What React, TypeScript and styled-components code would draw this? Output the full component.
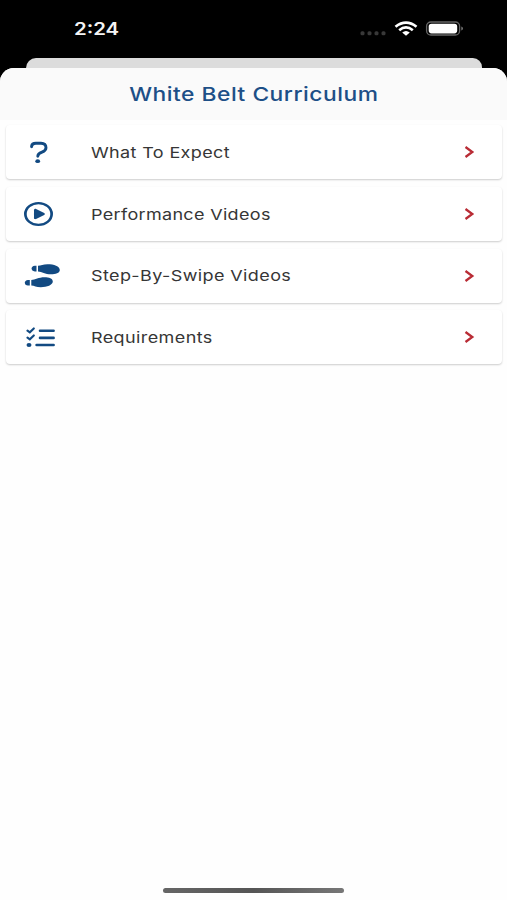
import React from 'react';
import styled, { createGlobalStyle } from 'styled-components';
import { FaRegCirclePlay } from 'react-icons/fa6';

const GlobalStyle = createGlobalStyle`
  * { box-sizing: border-box; }
  body { margin: 0; background: #000; font-family: Inter, 'Liberation Sans', sans-serif; }
`;

const Screen = styled.div`
  width: 507px;
  height: 900px;
  display: flex;
  flex-direction: column;
  overflow: hidden;
  background: #000;
`;

const StatusBar = styled.header`
  flex: none;
  height: 58px;
  display: flex;
  justify-content: space-between;
  align-items: center;
  padding: 0 43px 0 73.5px;
`;

const StretchedText = styled.span<{ $spacing?: number }>`
  display: inline-block;
  white-space: nowrap;
  letter-spacing: ${(p) => p.$spacing ?? 0}px;
  transform: scaleX(1.2);
`;

const Time = styled(StretchedText)`
  transform-origin: left;
  color: #f4f4f4;
  font-size: 17px;
  font-weight: 600;
  line-height: 20px;
`;

const StatusIcons = styled.svg`
  width: 104px;
  height: 20px;
  display: block;
`;

const BackSheet = styled.div`
  flex: none;
  height: 9.5px;
  margin: 0 25px 0 26px;
  border-radius: 12px 11px 0 0;
  background: #dcdcdc;
`;

const Sheet = styled.main`
  flex: 1;
  display: flex;
  flex-direction: column;
  border-radius: 14px 14px 0 0;
  background: #fefefe;
  overflow: hidden;
`;

const TitleBar = styled.div`
  flex: none;
  height: 52.5px;
  display: flex;
  align-items: center;
  justify-content: center;
  padding-top: 2px;
  background: #fafafa;
`;

const Title = styled.h1`
  margin: 0;
  font-size: 19px;
  font-weight: 500;
  line-height: 24px;
  color: #1d4f87;
`;

const List = styled.nav`
  display: flex;
  flex-direction: column;
  gap: 7.7px;
  padding: 5.3px 5px 0 6px;
`;

const Card = styled.a`
  height: 54px;
  display: grid;
  grid-template-columns: 85px 1fr 11px;
  align-items: center;
  padding: 0 27.5px 0 0;
  border-radius: 4px;
  background: #fff;
  box-shadow: 0 1px 2px rgba(0, 0, 0, 0.2);
  color: #363636;
`;

const IconCell = styled.span<{ $w: number; $h: number; $left: number }>`
  display: block;
  width: ${(p) => p.$w}px;
  height: ${(p) => p.$h}px;
  margin-left: ${(p) => p.$left}px;
  color: #124a82;
  svg { display: block; width: 100%; height: 100%; }
`;

const Label = styled(StretchedText)`
  justify-self: start;
  transform-origin: left;
  margin-top: 1.5px;
  margin-left: -0.5px;
  font-size: 15px;
  line-height: 20px;
`;

const Chevron = styled.svg`
  width: 11px;
  height: 14px;
  display: block;
`;

const HomeIndicator = styled.div`
  width: 181px;
  height: 5px;
  margin: auto auto 7.5px 163px;
  border-radius: 3px;
  background: linear-gradient(90deg, #666, #555 50%, #777);
`;

const QuestionIcon = () => (
  <svg viewBox="0 0 20 23">
    <path
      d="M2.6 5.8 V5.2 Q3 2.3 6.8 2.3 H12 Q17 2.4 17 6.8 Q17 9.6 13 11.2 Q8.8 12.9 8.8 15.2"
      fill="none" stroke="currentColor" strokeWidth="2.9" strokeLinecap="round"
    />
    <ellipse cx="8.7" cy="20.2" rx="2.4" ry="1.9" fill="currentColor" />
  </svg>
);

const PlayIcon = () => <FaRegCirclePlay viewBox="0 0 512 512" preserveAspectRatio="none" />;

const FootprintsIcon = () => (
  <svg viewBox="0 0 36 24" fill="currentColor">
    <path d="M12.5 1.8 L10.8 1.8 Q7.6 2.2 7.6 4.6 Q7.6 7 10.8 7.4 L12.5 7.4Z" />
    <path d="M14 1.8 C17 1.6 19 0.2 23.5 0.2 C30 0.2 35.8 2.2 35.8 5.9 C35.8 9 31.5 10.2 27 10.2 C21 10.2 18 7.6 14 7.4Z" />
    <path d="M5.8 16 L4 16 Q0.8 16.4 0.8 18.8 Q0.8 21.2 4 21.6 L5.8 21.6Z" />
    <path d="M7.3 16 C11.3 15.8 14.5 13.2 20.5 13.2 C25 13.2 28.8 14.5 28.8 17.5 C28.8 21 23 23.2 16.8 23.2 C12.3 23.2 10.3 21.8 7.3 21.6Z" />
  </svg>
);

const ChecklistIcon = () => (
  <svg viewBox="0 0 29 21" fill="none" stroke="currentColor" strokeWidth="2.6" strokeLinecap="round">
    <path strokeWidth="2.1" d="M1.5 3.6 L3.8 5.3 L7.8 1.4 M1.5 10.6 L3.8 12.3 L7.8 8.4" />
    <path d="M14 3.8 H27.6 M14 10.9 H27.6 M10.6 18 H27.6" />
    <ellipse cx="3" cy="18" rx="2.5" ry="2.1" fill="currentColor" stroke="none" />
  </svg>
);

const rows = [
  { label: 'What To Expect', spacing: 0.3, icon: QuestionIcon, w: 20, h: 23, left: 23 },
  { label: 'Performance Videos', spacing: 0.27, icon: PlayIcon, w: 29, h: 24, left: 18 },
  { label: 'Step-By-Swipe Videos', spacing: 0.33, icon: FootprintsIcon, w: 36, h: 24, left: 18 },
  { label: 'Requirements', spacing: 0.33, icon: ChecklistIcon, w: 29, h: 21, left: 20 },
];

export default function App() {
  return (
    <>
      <GlobalStyle />
      <Screen>
        <StatusBar>
          <Time>2:24</Time>
          <StatusIcons viewBox="0 0 104 20" aria-label="Wi-Fi connected, battery full">
            <g fill="#383838">
              <rect x="0.5" y="12.3" width="4" height="4" rx="1.5" />
              <rect x="7.5" y="12.3" width="4" height="4" rx="1.5" />
              <rect x="14.5" y="12.3" width="4" height="4" rx="1.5" />
              <rect x="21.5" y="12.3" width="4" height="4" rx="1.5" />
            </g>
            <g fill="none" stroke="#fff" strokeWidth="2.7">
              <path d="M35.5 7.7 Q46 -0.5 56.5 7.7" />
              <path d="M39.2 11.2 Q46 5.6 52.8 11.2" />
            </g>
            <path d="M42.2 13.4 Q46 10.4 49.8 13.4 L46 16.7Z" fill="#fff" />
            <rect x="66.6" y="3" width="33" height="13" rx="4.3" fill="none" stroke="#666" strokeWidth="1.3" />
            <rect x="68.7" y="4.7" width="28.5" height="9.7" rx="2.8" fill="#fff" />
            <path d="M101.3 7.4 Q103 8 103 9.5 Q103 11 101.3 11.6Z" fill="#777" />
          </StatusIcons>
        </StatusBar>
        <BackSheet />
        <Sheet>
          <TitleBar>
            <Title><StretchedText $spacing={0.42}>White Belt Curriculum</StretchedText></Title>
          </TitleBar>
          <List>
            {rows.map(({ label, spacing, icon: Icon, w, h, left }) => (
              <Card key={label}>
                <IconCell $w={w} $h={h} $left={left}>
                  <Icon />
                </IconCell>
                <Label $spacing={spacing}>{label}</Label>
                <Chevron viewBox="0 0 11 14">
                  <path d="M1.5 2 L8.3 7 L1.5 12" fill="none" stroke="#b92c35" strokeWidth="2.3" />
                </Chevron>
              </Card>
            ))}
          </List>
          <HomeIndicator />
        </Sheet>
      </Screen>
    </>
  );
}
